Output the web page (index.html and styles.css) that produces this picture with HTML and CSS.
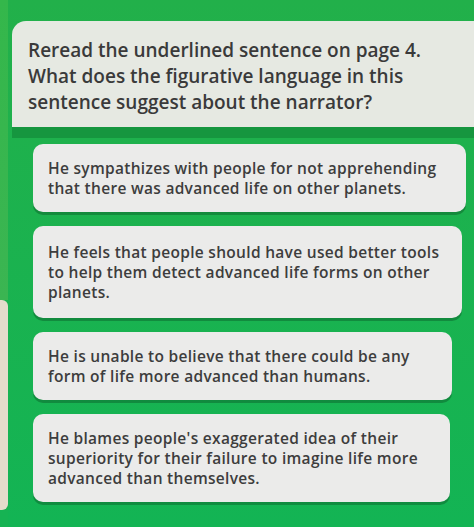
FILE: index.html
```html
<!DOCTYPE html>
<html lang="en">
<head>
<meta charset="utf-8">
<title>Question</title>
<link rel="stylesheet" href="styles.css">
</head>
<body>
<div class="screen">
  <div class="bezel">
    <div class="bezel-top"></div>
    <div class="bezel-mid"></div>
    <div class="bezel-bottom"></div>
  </div>
  <main class="content">
    <header class="question">
      <p>Reread the underlined sentence on page 4.<br>What does the figurative language in this<br>sentence suggest about the narrator?</p>
    </header>
    <ul class="options">
      <li class="option opt-1">He sympathizes with people for not apprehending<br>that there was advanced life on other planets.</li>
      <li class="option opt-2">He feels that people should have used better tools<br>to help them detect advanced life forms on other<br>planets.</li>
      <li class="option opt-3">He is unable to believe that there could be any<br>form of life more advanced than humans.</li>
      <li class="option opt-4">He blames people's exaggerated idea of their<br>superiority for their failure to imagine life more<br>advanced than themselves.</li>
    </ul>
  </main>
</div>
</body>
</html>
```
FILE: styles.css
```css
html, body {
  margin: 0;
  padding: 0;
}
body {
  width: 474px;
  height: 527px;
  overflow: hidden;
  background: #1cb24e;
  font-family: "Open Sans", "Noto Sans", "Liberation Sans", sans-serif;
  color: #3b3b3b;
}
.screen {
  display: flex;
  height: 527px;
}
.bezel {
  width: 8px;
  flex: none;
  display: flex;
  flex-direction: column;
}
.bezel-top {
  height: 300px;
  background: linear-gradient(to bottom, #34b74b, #3bb552);
}
.bezel-mid {
  height: 210px;
  background: #e4dccb;
  border-radius: 0 6px 6px 0;
}
.bezel-bottom {
  flex: 1;
  background: #16b353;
}
.content {
  flex: 1;
  padding-top: 21px;
  min-width: 0;
  background: linear-gradient(to bottom, #22b04a, #13b454);
}
.question {
  margin-left: 4px;
  background: #e6e9e2;
  border-radius: 14px 0 0 0;
  padding: 16px 16px 12px 16px;
  box-shadow: 0 11px 0 #16963f;
}
.question p {
  margin: 0;
  font-size: 19px;
  line-height: 26px;
  font-weight: 600;
  color: #3a3a3a;
  white-space: nowrap;
}
.options {
  list-style: none;
  margin: 17px 0 0 0;
  padding: 0 0 0 25px;
  display: flex;
  flex-direction: column;
  gap: 14px;
}
.option {
  background: #ebebea;
  border-radius: 10px;
  padding: 14px 14px 14px 15px;
  font-size: 15.5px;
  line-height: 20px;
  letter-spacing: 0.3px;
  font-weight: 600;
  color: #3d3d3d;
  white-space: nowrap;
  box-shadow: 0 3px 0 rgba(10, 90, 40, 0.45);
}
.opt-1 { margin-right: 8px; }
.opt-2 { margin-right: 12px; padding-top: 16px; padding-bottom: 16px; }
.opt-3 { margin-right: 22px; }
.opt-4 { margin-right: 24px; }
```
